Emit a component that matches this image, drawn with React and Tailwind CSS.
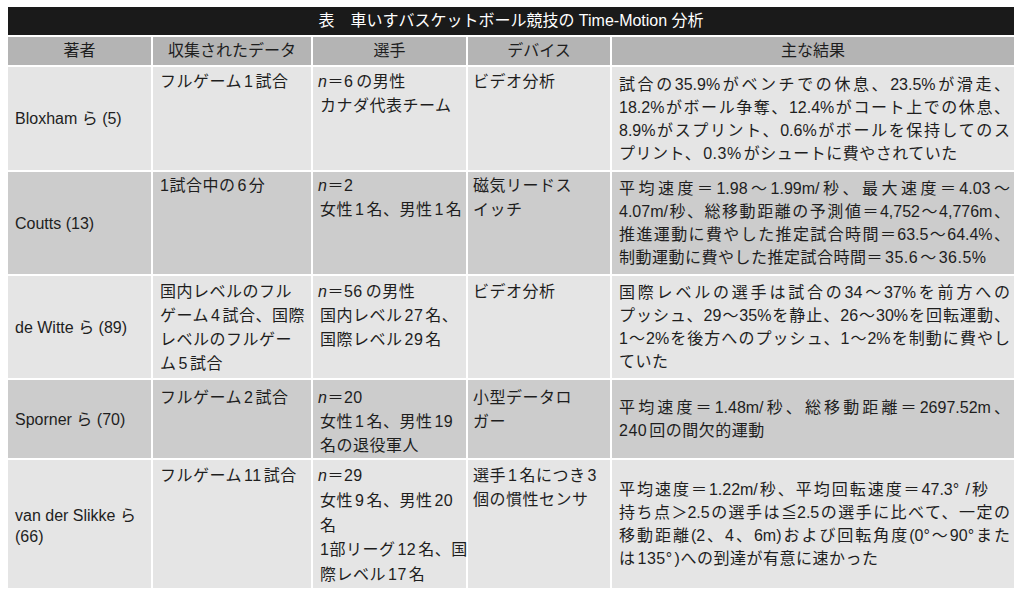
import React from "react";

const N = () => <i className="font-['Liberation_Sans',sans-serif] italic">n</i>;
const D = ({ children }) => <span className="px-[2px]">{children}</span>;
const R = ({ children }) => <span className="pr-[3px]">{children}</span>;

function J({ children, className = "" }) {
  return <div className={"text-justify [text-align-last:justify] tracking-normal " + className}>{children}</div>;
}
function L({ children, className = "" }) {
  return <div className={"whitespace-nowrap tracking-[0.5px] " + className}>{children}</div>;
}

function C1({ bg, children }) {
  return <div className={bg + " flex items-center pl-[7px] pr-[4px] leading-[21px]"}>{children}</div>;
}
function CT({ bg, pad = "pl-[7px]", pt = "pt-[4px]", lh = "leading-[24px]", children }) {
  return <div className={bg + " " + pad + " " + pt + " " + lh + " pr-[3px]"}>{children}</div>;
}
function C5({ bg, children }) {
  return <div className={bg + " flex flex-col justify-center pl-[7px] pr-[4px] leading-[23px]"}>{children}</div>;
}

export default function App() {
  const lt = "bg-[#e5e5e5]";
  const dk = "bg-[#cccccc]";
  return (
    <div className="w-[1024px] h-[599px] bg-white pt-[7px] pl-[8px] text-[#1e1e1e] font-['Liberation_Sans','Noto_Sans_CJK_JP',sans-serif] text-[16px]">
      <div className="w-[1006px]">
        <div className="h-[28px] bg-[#1a1a1a] text-white text-[16px] font-normal flex items-center justify-center mb-[2px]">
          表　車いすバスケットボール競技の Time-Motion 分析
        </div>
        <div className="grid grid-cols-[143px_158px_153px_142px_402px] grid-rows-[28px_103px_102px_102px_78px_128px] gap-[2px]">
          {["著者", "収集されたデータ", "選手", "デバイス", "主な結果"].map((h) => (
            <div key={h} className="bg-[#b4b4b4] flex items-center justify-center">
              {h}
            </div>
          ))}

          {/* Row 1 */}
          <C1 bg={lt}>Bloxham ら (5)</C1>
          <CT bg={lt} pt="pt-[3px]">
            <L>フルゲーム<D>1</D>試合</L>
          </CT>
          <CT bg={lt} pt="pt-[3px]">
            <L className="-ml-[2px]"><N />＝<R>6</R>の男性</L>
            <L>カナダ代表チーム</L>
          </CT>
          <CT bg={lt} pad="pl-[5px]" pt="pt-[3px]">
            <L>ビデオ分析</L>
          </CT>
          <C5 bg={lt}>
            <J>試合の35.9%がベンチでの休息、23.5%が滑走、</J>
            <J>18.2%がボール争奪、12.4%がコート上での休息、</J>
            <J>8.9%がスプリント、0.6%がボールを保持してのス</J>
            <L>プリント、<D>0.3%</D>がシュートに費やされていた</L>
          </C5>

          {/* Row 2 */}
          <C1 bg={dk}>Coutts (13)</C1>
          <CT bg={dk} pt="pt-[2px]">
            <L>1試合中の<D>6</D>分</L>
          </CT>
          <CT bg={dk} pt="pt-[2px]">
            <L className="-ml-[2px]"><N />＝2</L>
            <L>女性<D>1</D>名、男性<D>1</D>名</L>
          </CT>
          <CT bg={dk} pad="pl-[5px]" pt="pt-[2px]">
            <L>磁気リードス</L>
            <L>イッチ</L>
          </CT>
          <C5 bg={dk}>
            <J>平均速度＝1.98〜1.99m/秒、最大速度＝4.03〜</J>
            <J>4.07m/秒、総移動距離の予測値＝4,752〜4,776m、</J>
            <J>推進運動に費やした推定試合時間＝63.5〜64.4%、</J>
            <L>制動運動に費やした推定試合時間＝<D>35.6</D>〜<D>36.5%</D></L>
          </C5>

          {/* Row 3 */}
          <C1 bg={lt}>de Witte ら (89)</C1>
          <CT bg={lt}>
            <L>国内レベルのフル</L>
            <L>ゲーム<D>4</D>試合、国際</L>
            <L>レベルのフルゲー</L>
            <L>ム<D>5</D>試合</L>
          </CT>
          <CT bg={lt}>
            <L className="-ml-[2px]"><N />＝<R>56</R>の男性</L>
            <L>国内レベル<D>27</D>名、</L>
            <L>国際レベル<D>29</D>名</L>
          </CT>
          <CT bg={lt} pad="pl-[5px]">
            <L>ビデオ分析</L>
          </CT>
          <C5 bg={lt}>
            <J>国際レベルの選手は試合の34〜37%を前方への</J>
            <J>プッシュ、29〜35%を静止、26〜30%を回転運動、</J>
            <J>1〜2%を後方へのプッシュ、1〜2%を制動に費やし</J>
            <L>ていた</L>
          </C5>

          {/* Row 4 */}
          <C1 bg={dk}>Sporner ら (70)</C1>
          <CT bg={dk} pt="pt-[6px]">
            <L>フルゲーム<D>2</D>試合</L>
          </CT>
          <CT bg={dk} pt="pt-[6px]">
            <L className="-ml-[2px]"><N />＝20</L>
            <L>女性<D>1</D>名、男性<D>19</D></L>
            <L>名の退役軍人</L>
          </CT>
          <CT bg={dk} pad="pl-[5px]" pt="pt-[6px]">
            <L>小型データロ</L>
            <L>ガー</L>
          </CT>
          <C5 bg={dk}>
            <J>平均速度＝1.48m/秒、総移動距離＝2697.52m、</J>
            <L>240<span className="pl-[2px]">回の間欠的運動</span></L>
          </C5>

          {/* Row 5 */}
          <C1 bg={lt}>
            <div className="pt-[4px]">
              van der Slikke ら
              <br />
              (66)
            </div>
          </C1>
          <CT bg={lt}>
            <L>フルゲーム<D>11</D>試合</L>
          </CT>
          <CT bg={lt} lh="leading-[24.75px]">
            <L className="-ml-[2px]"><N />＝29</L>
            <L>女性<D>9</D>名、男性<D>20</D></L>
            <L>名</L>
            <L>1部リーグ<D>12</D>名、国</L>
            <L>際レベル<D>17</D>名</L>
          </CT>
          <CT bg={lt} pad="pl-[5px]">
            <L>選手<D>1</D>名につき<D>3</D></L>
            <L>個の慣性センサ</L>
          </CT>
          <C5 bg={lt}>
            <J className="mr-[22px]">平均速度＝1.22m/秒、平均回転速度＝47.3° /秒</J>
            <J>持ち点＞2.5の選手は≦2.5の選手に比べて、一定の</J>
            <J>移動距離(2、4、6m)および回転角度(0°〜90°また</J>
            <L>は<D>135°</D>)への到達が有意に速かった</L>
          </C5>
        </div>
      </div>
    </div>
  );
}
